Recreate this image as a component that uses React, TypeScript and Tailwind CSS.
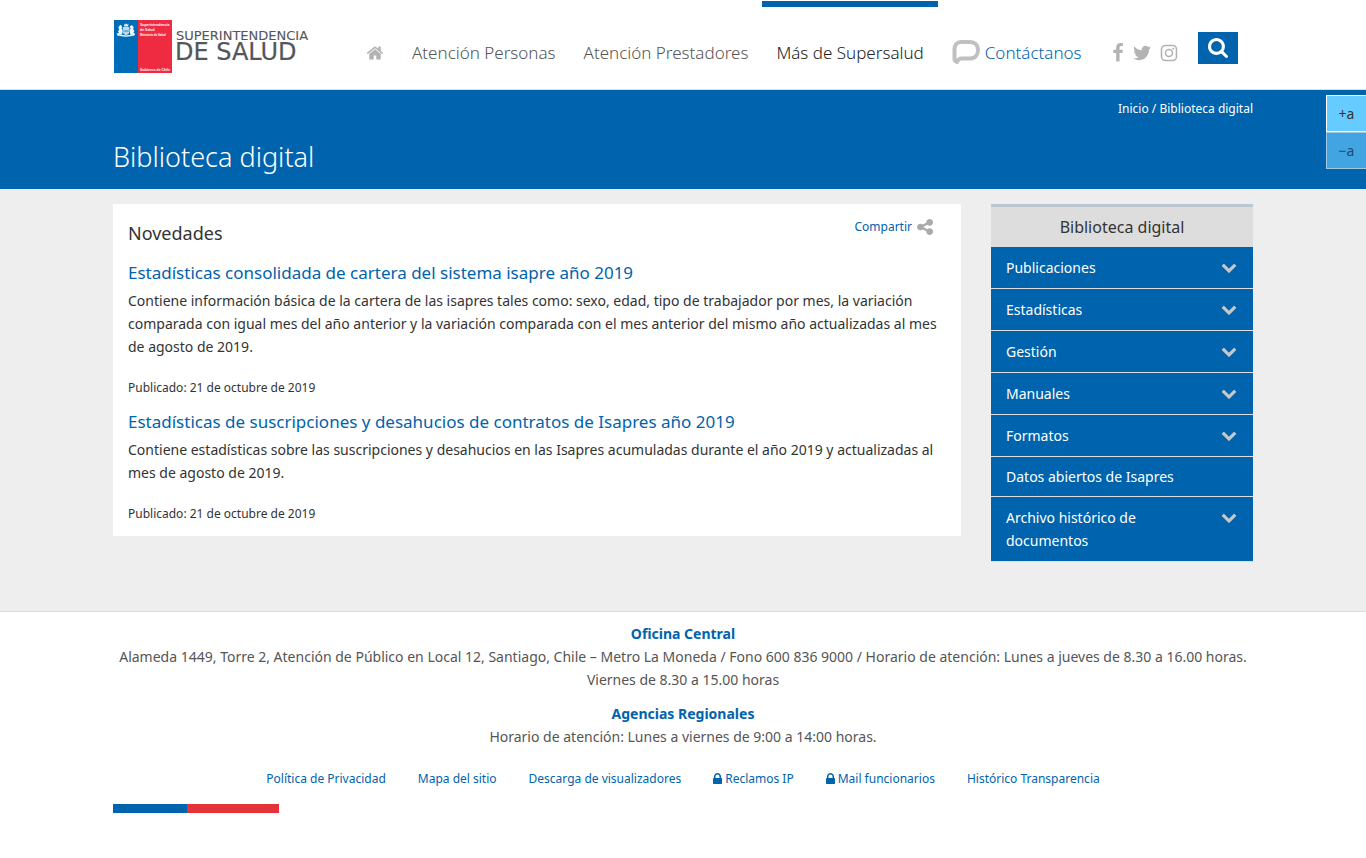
import React, { useState } from 'react';

const PATHS = {
  home: 'M1472 992v480q0 26-19 45t-45 19h-384v-384h-256v384h-384q-26 0-45-19t-19-45v-480q0-1 .5-3t.5-3l575-474 575 474q1 2 1 6zm223-69l-62 74q-8 9-21 11h-3q-13 0-21-7l-692-577-692 577q-12 8-24 7-13-2-21-11l-62-74q-8-10-7-23.5t11-21.5l719-599q32-26 76-26t76 26l244 204v-195q0-14 9-23t23-9h192q14 0 23 9t9 23v408l219 182q10 8 11 21.5t-7 23.5z',
  chevron: 'M1683 808l-742 741q-19 19-45 19t-45-19l-742-741q-19-19-19-45.5t19-45.5l166-165q19-19 45-19t45 19l531 531 531-531q19-19 45-19t45 19l166 165q19 19 19 45.5t-19 45.5z',
  search: 'M1216 832q0-185-131.5-316.5t-316.5-131.5-316.5 131.5-131.5 316.5 131.5 316.5 316.5 131.5 316.5-131.5 131.5-316.5zm512 832q0 52-38 90t-90 38q-54 0-90-38l-343-342q-179 124-399 124-143 0-273.5-55.5t-225-150-150-225-55.5-273.5 55.5-273.5 150-225 225-150 273.5-55.5 273.5 55.5 225 150 150 225 55.5 273.5q0 220-124 399l343 343q37 37 37 90z',
  share: 'M1344 1024q133 0 226.5 93.5t93.5 226.5-93.5 226.5-226.5 93.5-226.5-93.5-93.5-226.5q0-12 2-34l-360-180q-92 86-218 86-133 0-226.5-93.5t-93.5-226.5 93.5-226.5 226.5-93.5q126 0 218 86l360-180q-2-22-2-34 0-133 93.5-226.5t226.5-93.5 226.5 93.5 93.5 226.5-93.5 226.5-226.5 93.5q-126 0-218-86l-360 180q2 22 2 34t-2 34l360 180q92-86 218-86z',
  lock: 'M640 768h512v-192q0-106-75-181t-181-75-181 75-75 181v192zm832 96v576q0 40-28 68t-68 28h-960q-40 0-68-28t-28-68v-576q0-40 28-68t68-28h32v-192q0-184 132-316t316-132 316 132 132 316v192h32q40 0 68 28t28 68z',
  facebook: 'M1343 12v264h-157q-86 0-116 36t-30 108v189h293l-39 296h-254v759h-306v-759h-255v-296h255v-218q0-186 104-288.5t277-102.5q147 0 228 12z',
  twitter: 'M1684 408q-67 98-162 167 1 14 1 42 0 130-38 259.5t-115.5 248.5-184.5 210.5-258 146-323 54.5q-271 0-496-145 35 4 78 4 225 0 401-138-105-2-188-64.5t-114-159.5q33 5 61 5 43 0 85-11-112-23-185.5-111.5t-73.5-205.5v-4q68 38 146 41-66-44-105-115t-39-154q0-88 44-163 121 149 294.5 238.5t371.5 99.5q-8-38-8-74 0-134 94.5-228.5t228.5-94.5q140 0 236 102 109-21 205-78-37 115-142 178 93-10 186-50z',
};

const Icon = ({ name, className, viewBox = '0 0 1792 1792' }: { name: keyof typeof PATHS; className: string; viewBox?: string }) => (
  <svg viewBox={viewBox} className={`shrink-0 fill-current ${className}`} aria-hidden="true">
    <path d={PATHS[name]} />
  </svg>
);

const Logo = () => (
  <svg width="201" height="54" viewBox="0 0 201 54" role="img" aria-label="Superintendencia de Salud">
    <rect x="1" y="0" width="24" height="53" fill="#006cb7" />
    <rect x="25" y="0" width="34" height="53" fill="#ef2b42" />
    {/* Coat of arms */}
    <g fill="#fff">
      <path d="M11 3.4l1 1.4 1.2-1.6 1.2 1.6 1.1-1.2-.4 3h-3.8z" opacity=".9" />
      <path d="M9.8 7h6.600v4.600q0 2.600-3.300 3.800-3.300-1.200-3.300-3.800z" opacity=".75" />
      <path d="M7.200 4.800l2 1.500-.6 2 1 2.200-.5 4H4.600l1.200-2-.8-1.200 1.400-2-1.200-1.600z" opacity=".95" />
      <path d="M18.800 5l-2 1.600.8 2-1 2.200.8 3.900h4.200l-1.200-2 1-1.600-1.300-2 .6-2.200z" opacity=".95" />
      <path d="M3.600 13l3 1.500 6.600.9 6.400-.9 2.600-1.500-.8 2.600q-8 2.300-17 0z" />
    </g>
    <path d="M10.400 11h5.400" stroke="#006cb7" strokeWidth=".8" />
    <g fill="#fff" fontFamily="'Liberation Sans', sans-serif" fontWeight="700">
      <text x="27" y="6" fontSize="3.500">Superintendencia</text>
      <text x="27" y="11" fontSize="3.500">de Salud</text>
      <text x="27" y="16" fontSize="2.800">Ministerio de Salud</text>
      <text x="27" y="51" fontSize="3.500">Gobierno de Chile</text>
    </g>
    <g fill="#55565a" stroke="#55565a" fontFamily="'DejaVu Sans', sans-serif">
      <text x="63" y="20" fontSize="13" strokeWidth=".1">SUPERINTENDENCIA</text>
      <text x="62" y="40" fontSize="24" strokeWidth=".2">DE SALUD</text>
    </g>
  </svg>
);

const NAV = [
  { label: 'Atención Personas', active: false },
  { label: 'Atención Prestadores', active: false },
  { label: 'Más de Supersalud', active: true },
];

const NEWS = [
  {
    title: 'Estadísticas consolidada de cartera del sistema isapre año 2019',
    body: 'Contiene información básica de la cartera de las isapres tales como: sexo, edad, tipo de trabajador por mes, la variación comparada con igual mes del año anterior y la variación comparada con el mes anterior del mismo año actualizadas al mes de agosto de 2019.',
    date: '21 de octubre de 2019',
  },
  {
    title: 'Estadísticas de suscripciones y desahucios de contratos de Isapres año 2019',
    body: 'Contiene estadísticas sobre las suscripciones y desahucios en las Isapres acumuladas durante el año 2019 y actualizadas al mes de agosto de 2019.',
    date: '21 de octubre de 2019',
  },
];

const SECTIONS = ['Publicaciones', 'Estadísticas', 'Gestión', 'Manuales', 'Formatos', 'Datos abiertos de Isapres', 'Archivo histórico de documentos'];

const FOOTER_LINKS = [
  { label: 'Política de Privacidad', locked: false },
  { label: 'Mapa del sitio', locked: false },
  { label: 'Descarga de visualizadores', locked: false },
  { label: 'Reclamos IP', locked: true },
  { label: 'Mail funcionarios', locked: true },
  { label: 'Histórico Transparencia', locked: false },
];

const Header = () => (
  <header className="border-b border-[#ddd] bg-white">
    <div className="mx-auto flex h-[89px] max-w-[1170px] items-start px-[15px]">
      <a href="#" className="mt-5 shrink-0"><Logo /></a>
      <nav className="ml-[38px] flex h-full text-[17px] leading-7 font-light text-[#555]">
        <a href="#" aria-label="Inicio" className="px-[14px] pt-11 text-[#b3b3b3]">
          <Icon name="home" className="h-[18px] w-[18px]" />
        </a>
        {NAV.map((item) => (
          <a
            key={item.label}
            href="#"
            className={`mt-px border-t-6 px-[14px] pt-8 whitespace-nowrap ${item.active ? 'border-[#0063ad] text-[#222]' : 'border-transparent'}`}
          >
            {item.label}
          </a>
        ))}
        <a href="#" className="mt-[39px] flex items-start gap-1 pl-[13px] text-[#0063ad]">
          <svg width="30" height="27" viewBox="0 0 30 27" fill="none" stroke="#c0c0c0" strokeWidth="4" strokeLinejoin="round" aria-hidden="true">
            <path d="M10 3h9c5 0 8 3.200 8 8s-3 8.500-8 8.500h-8.500c-2.500 0-3.500 1-4.500 3.500-1.500-.5-2.500-1.500-2.500-3.500V10.500C3.500 6 6 3 10 3z" />
          </svg>
          <span>Contáctanos</span>
        </a>
      </nav>
      <div className="ml-[30px] flex items-center gap-2 pt-[43px] text-[#b3b3b3]">
        <a href="#" aria-label="Facebook"><Icon name="facebook" viewBox="400 0 1000 1792" className="h-5 w-3" /></a>
        <a href="#" aria-label="Twitter"><Icon name="twitter" className="h-5 w-5" /></a>
        <a href="#" aria-label="Instagram">
          <svg width="18" height="18" viewBox="0 0 18 18" fill="none" stroke="currentColor" strokeWidth="1.600" aria-hidden="true">
            <rect x="1.500" y="1.500" width="15" height="15" rx="4" />
            <circle cx="9" cy="9" r="3.500" />
            <circle cx="13.200" cy="4.800" r="1" fill="currentColor" stroke="none" />
          </svg>
        </a>
      </div>
      <button type="button" aria-label="Buscar" className="mt-8 mr-[15px] ml-auto flex h-8 w-10 items-center justify-center bg-[#0063ad] text-white">
        <Icon name="search" viewBox="64 128 1664 1664" className="h-5 w-5" />
      </button>
    </div>
  </header>
);

const TitleBand = () => (
  <div className="bg-[#0063ad] text-white">
    <div className="mx-auto max-w-[1170px] px-[15px] pt-[9px] pb-[14px]">
      <p className="text-right text-xs leading-5">
        <a href="#">Inicio</a> / <a href="#">Biblioteca digital</a>
      </p>
      <h1 className="mt-[19px] text-[27px] leading-[37px] font-light">Biblioteca digital</h1>
    </div>
  </div>
);

const Sidebar = () => {
  const [open, setOpen] = useState<string | null>(null);

  return (
    <aside className="w-[262px] shrink-0 self-start border-t-3 border-[#b9c7d0]">
      <h2 className="bg-[#ddd] text-center text-base leading-10 text-[#333]">Biblioteca digital</h2>
      <ul className="text-sm leading-[23px] text-white">
        {SECTIONS.map((name) => (
          <li key={name} className="border-b border-[#ddd] bg-[#0063ad]">
            {name.startsWith('Datos') ? (
              <a href="#" className="block px-[15px] py-2">{name}</a>
            ) : (
              <button
                type="button"
                aria-expanded={open === name}
                onClick={() => setOpen(open === name ? null : name)}
                className="flex w-full items-start justify-between py-[9px] pr-4 pl-[15px] text-left"
              >
                <span className="w-40">{name}</span>
                <Icon name="chevron" className="mt-[3px] h-4 w-4 text-[#c8c8c8]" />
              </button>
            )}
          </li>
        ))}
      </ul>
    </aside>
  );
};

const Footer = () => (
  <footer className="border-t border-[#ddd] bg-white">
    <div className="mx-auto max-w-[1170px] px-[15px] pt-[10px] text-center text-sm leading-[23px] text-[#555]">
      <h3 className="font-bold text-[#0063ad]">Oficina Central</h3>
      <p>
        Alameda 1449, Torre 2, Atención de Público en Local 12, Santiago, Chile – Metro La Moneda / Fono 600 836 9000 / Horario de atención: Lunes a jueves de 8.30 a 16.00 horas. Viernes de 8.30 a 15.00 horas
      </p>
      <h3 className="mt-[11px] font-bold text-[#0063ad]">Agencias Regionales</h3>
      <p>Horario de atención: Lunes a viernes de 9:00 a 14:00 horas.</p>
      <ul className="mt-[21px] flex flex-wrap justify-center gap-x-8 text-xs leading-5 text-[#0063ad]">
        {FOOTER_LINKS.map((link) => (
          <li key={link.label}>
            <a href="#" className="flex items-center">
              {link.locked && <Icon name="lock" viewBox="320 128 1152 1408" className="mr-[3px] mb-[2px] h-[11px] w-[9px]" />}
              {link.label}
            </a>
          </li>
        ))}
      </ul>
      <div className="mt-[15px] flex h-[9px]">
        <div className="w-[74px] bg-[#0063ad]"></div>
        <div className="w-[92px] bg-[#e53439]"></div>
      </div>
    </div>
  </footer>
);

const App: React.FC = () => {
  return (
    <div className="relative min-h-screen bg-white font-['Noto_Sans',sans-serif] text-[#333]">
      <Header />
      <TitleBand />

      {/* Text size controls */}
      <div className="absolute top-[95px] right-0 flex w-10 flex-col text-sm">
        <button type="button" className="h-[37px] border border-r-0 border-white bg-[#66ccff] text-[#333]">+a</button>
        <button type="button" className="h-[37px] border border-r-0 border-[#a5c8e2] bg-[#42a4e0] text-[#1f4b73]">−a</button>
      </div>

      <main className="bg-[#eee]">
        <div className="mx-auto flex max-w-[1170px] items-start gap-[30px] px-[15px] pt-[15px] pb-[49px]">
          <section className="flex-1 bg-white px-[15px] pt-[15px] pb-[11px]">
            <div className="flex items-start justify-between">
              <h2 className="text-lg leading-7">Novedades</h2>
              <a href="#" className="mr-[13px] flex items-center text-xs leading-4 text-[#0063ad]">
                Compartir
                <Icon name="share" viewBox="128 128 1536 1536" className="ml-[5px] h-4 w-4 text-[#aaa]" />
              </a>
            </div>
            {NEWS.map((item, i) => (
              <article key={item.title} className={i === 0 ? 'mt-[15px]' : 'mt-3'}>
                <h3 className="text-[17px] leading-[22px] text-[#0063ad]"><a href="#">{item.title}</a></h3>
                <p className="mt-[5px] text-sm leading-[23px]">{item.body}</p>
                <p className="mt-[18px] text-xs leading-[23px]">Publicado: {item.date}</p>
              </article>
            ))}
          </section>
          <Sidebar />
        </div>
      </main>

      <Footer />
    </div>
  );
};

export default App;
